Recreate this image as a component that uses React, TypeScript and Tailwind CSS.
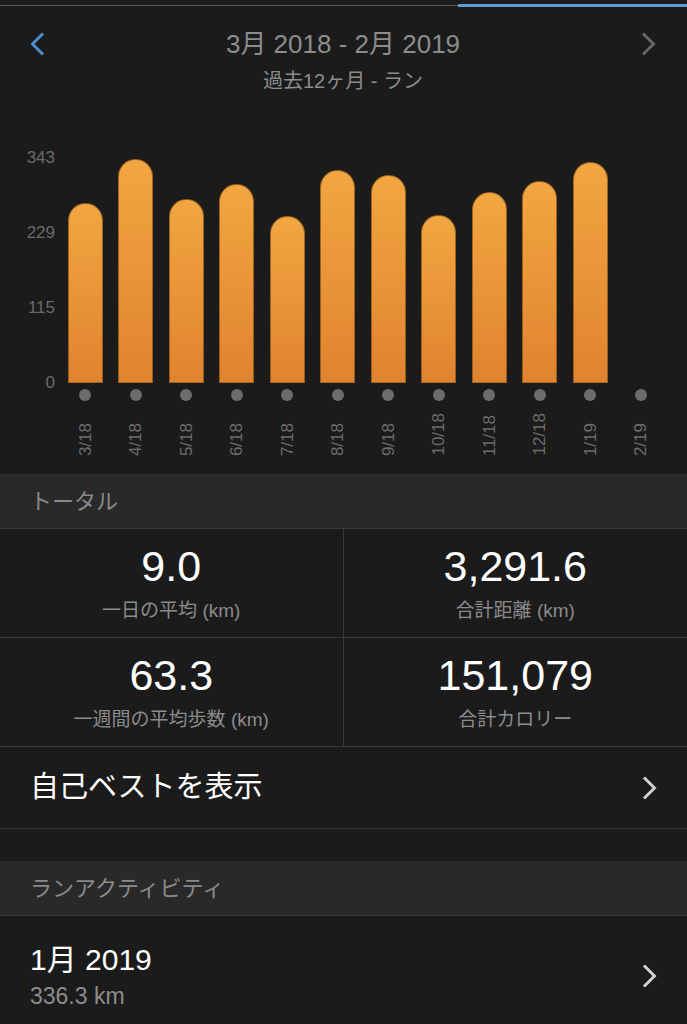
import React from "react";

const FONT = '"Liberation Sans", "Noto Sans CJK JP", sans-serif';

const months = [
  { label: "3/18", km: 274.4 },
  { label: "4/18", km: 341.5 },
  { label: "5/18", km: 280.5 },
  { label: "6/18", km: 303.4 },
  { label: "7/18", km: 254.6 },
  { label: "8/18", km: 324.7 },
  { label: "9/18", km: 317.1 },
  { label: "10/18", km: 256.1 },
  { label: "11/18", km: 291.2 },
  { label: "12/18", km: 308.0 },
  { label: "1/19", km: 336.3 },
  { label: "2/19", km: 0 },
];

const MAX = 343;
const PLOT_H = 225;

function Chevron({ dir, color }: { dir: "left" | "right"; color: string }) {
  return (
    <svg width="16" height="24" viewBox="0 0 16 24" className="shrink-0">
      <path
        d={dir === "left" ? "M13 2.5 L3.5 12 L13 21.5" : "M3 2.5 L12.5 12 L3 21.5"}
        fill="none"
        stroke={color}
        strokeWidth="3"
        strokeLinecap="square"
        strokeLinejoin="miter"
      />
    </svg>
  );
}

function SectionHeader({ title }: { title: string }) {
  return (
    <div className="flex h-[55px] items-center border-b border-[#3a3a3a] bg-[#292929] px-[30px]">
      <span className="text-[22px] text-[#8a8a8a]">{title}</span>
    </div>
  );
}

function Stat({ value, label, right }: { value: string; label: string; right?: boolean }) {
  return (
    <div
      className={`flex h-[108px] flex-col items-center pt-[14px] ${right ? "" : "border-r border-[#3a3a3a]"}`}
    >
      <div className="text-[43px] leading-[46px] text-white">{value}</div>
      <div className="mt-[10px] text-[19px] leading-[24px] text-[#8c8c8c]">{label}</div>
    </div>
  );
}

export default function App() {
  return (
    <div
      className="h-[1024px] w-[687px] overflow-hidden bg-[#1b1b1b]"
      style={{ fontFamily: FONT }}
    >
      {/* tab indicator */}
      <div className="flex h-[11px] items-center">
        <div className="h-px w-[458px] bg-[#5c5c5c]" />
        <div className="h-[3px] flex-1 bg-[#5b9bd5]" />
      </div>

      {/* header */}
      <div className="flex items-start pl-[29px] pr-[30px] pt-[21px]">
        <Chevron dir="left" color="#4a90d2" />
        <div className="flex flex-1 flex-col items-center -mt-[4px]">
          <div className="text-[26px] leading-[32px] text-[#8c8c8c]">3月 2018 - 2月 2019</div>
          <div className="mt-[8px] text-[20px] leading-[26px] text-[#8c8c8c]">過去12ヶ月 - ラン</div>
        </div>
        <Chevron dir="right" color="#666666" />
      </div>

      {/* chart */}
      <div className="flex pb-[18px] pt-[64px]">
        <div className="flex h-[225px] w-[60px] flex-col justify-between pr-[5px]">
          {["343", "229", "115", "0"].map((t) => (
            <div key={t} className="flex h-0 items-center justify-end text-[17px] text-[#6a6a6a]">
              {t}
            </div>
          ))}
        </div>
        {months.map((m) => (
          <div key={m.label} className="flex w-[50.5px] flex-col items-center">
            <div className="flex h-[225px] items-end">
              {m.km > 0 && (
                <div
                  className="w-[35px] rounded-t-full border border-[#6b3f0c]/60 bg-gradient-to-b from-[#f2a641] to-[#e0832f]"
                  style={{ height: `${(m.km / MAX) * PLOT_H}px` }}
                />
              )}
            </div>
            <div className="mt-[6px] size-[12px] rounded-full bg-[#6c6c6c]" />
            <div className="mt-[2px] flex h-[53px] items-end justify-center">
              <span className="rotate-180 text-[17px] leading-none text-[#6c6c6c] [writing-mode:vertical-rl]">
                {m.label}
              </span>
            </div>
          </div>
        ))}
      </div>

      <SectionHeader title="トータル" />

      <div className="grid grid-cols-2 border-b border-[#3a3a3a]">
        <div className="border-b border-[#3a3a3a]">
          <Stat value="9.0" label="一日の平均 (km)" />
        </div>
        <div className="border-b border-[#3a3a3a]">
          <Stat value="3,291.6" label="合計距離 (km)" right />
        </div>
        <Stat value="63.3" label="一週間の平均歩数 (km)" />
        <Stat value="151,079" label="合計カロリー" right />
      </div>

      <div className="flex h-[82px] items-center justify-between border-b border-[#3a3a3a] pl-[30px] pr-[29px]">
        <span className="text-[29px] text-white">自己ベストを表示</span>
        <Chevron dir="right" color="#cfcfcf" />
      </div>

      <div className="h-[32px]" />

      <SectionHeader title="ランアクティビティ" />

      <div className="flex items-center justify-between pl-[30px] pr-[29px] pt-[26px]">
        <div className="flex flex-col">
          <span className="text-[30px] leading-[36px] text-white">1月 2019</span>
          <span className="mt-[4px] text-[23px] leading-[28px] text-[#8c8c8c]">336.3 km</span>
        </div>
        <Chevron dir="right" color="#cfcfcf" />
      </div>
    </div>
  );
}
